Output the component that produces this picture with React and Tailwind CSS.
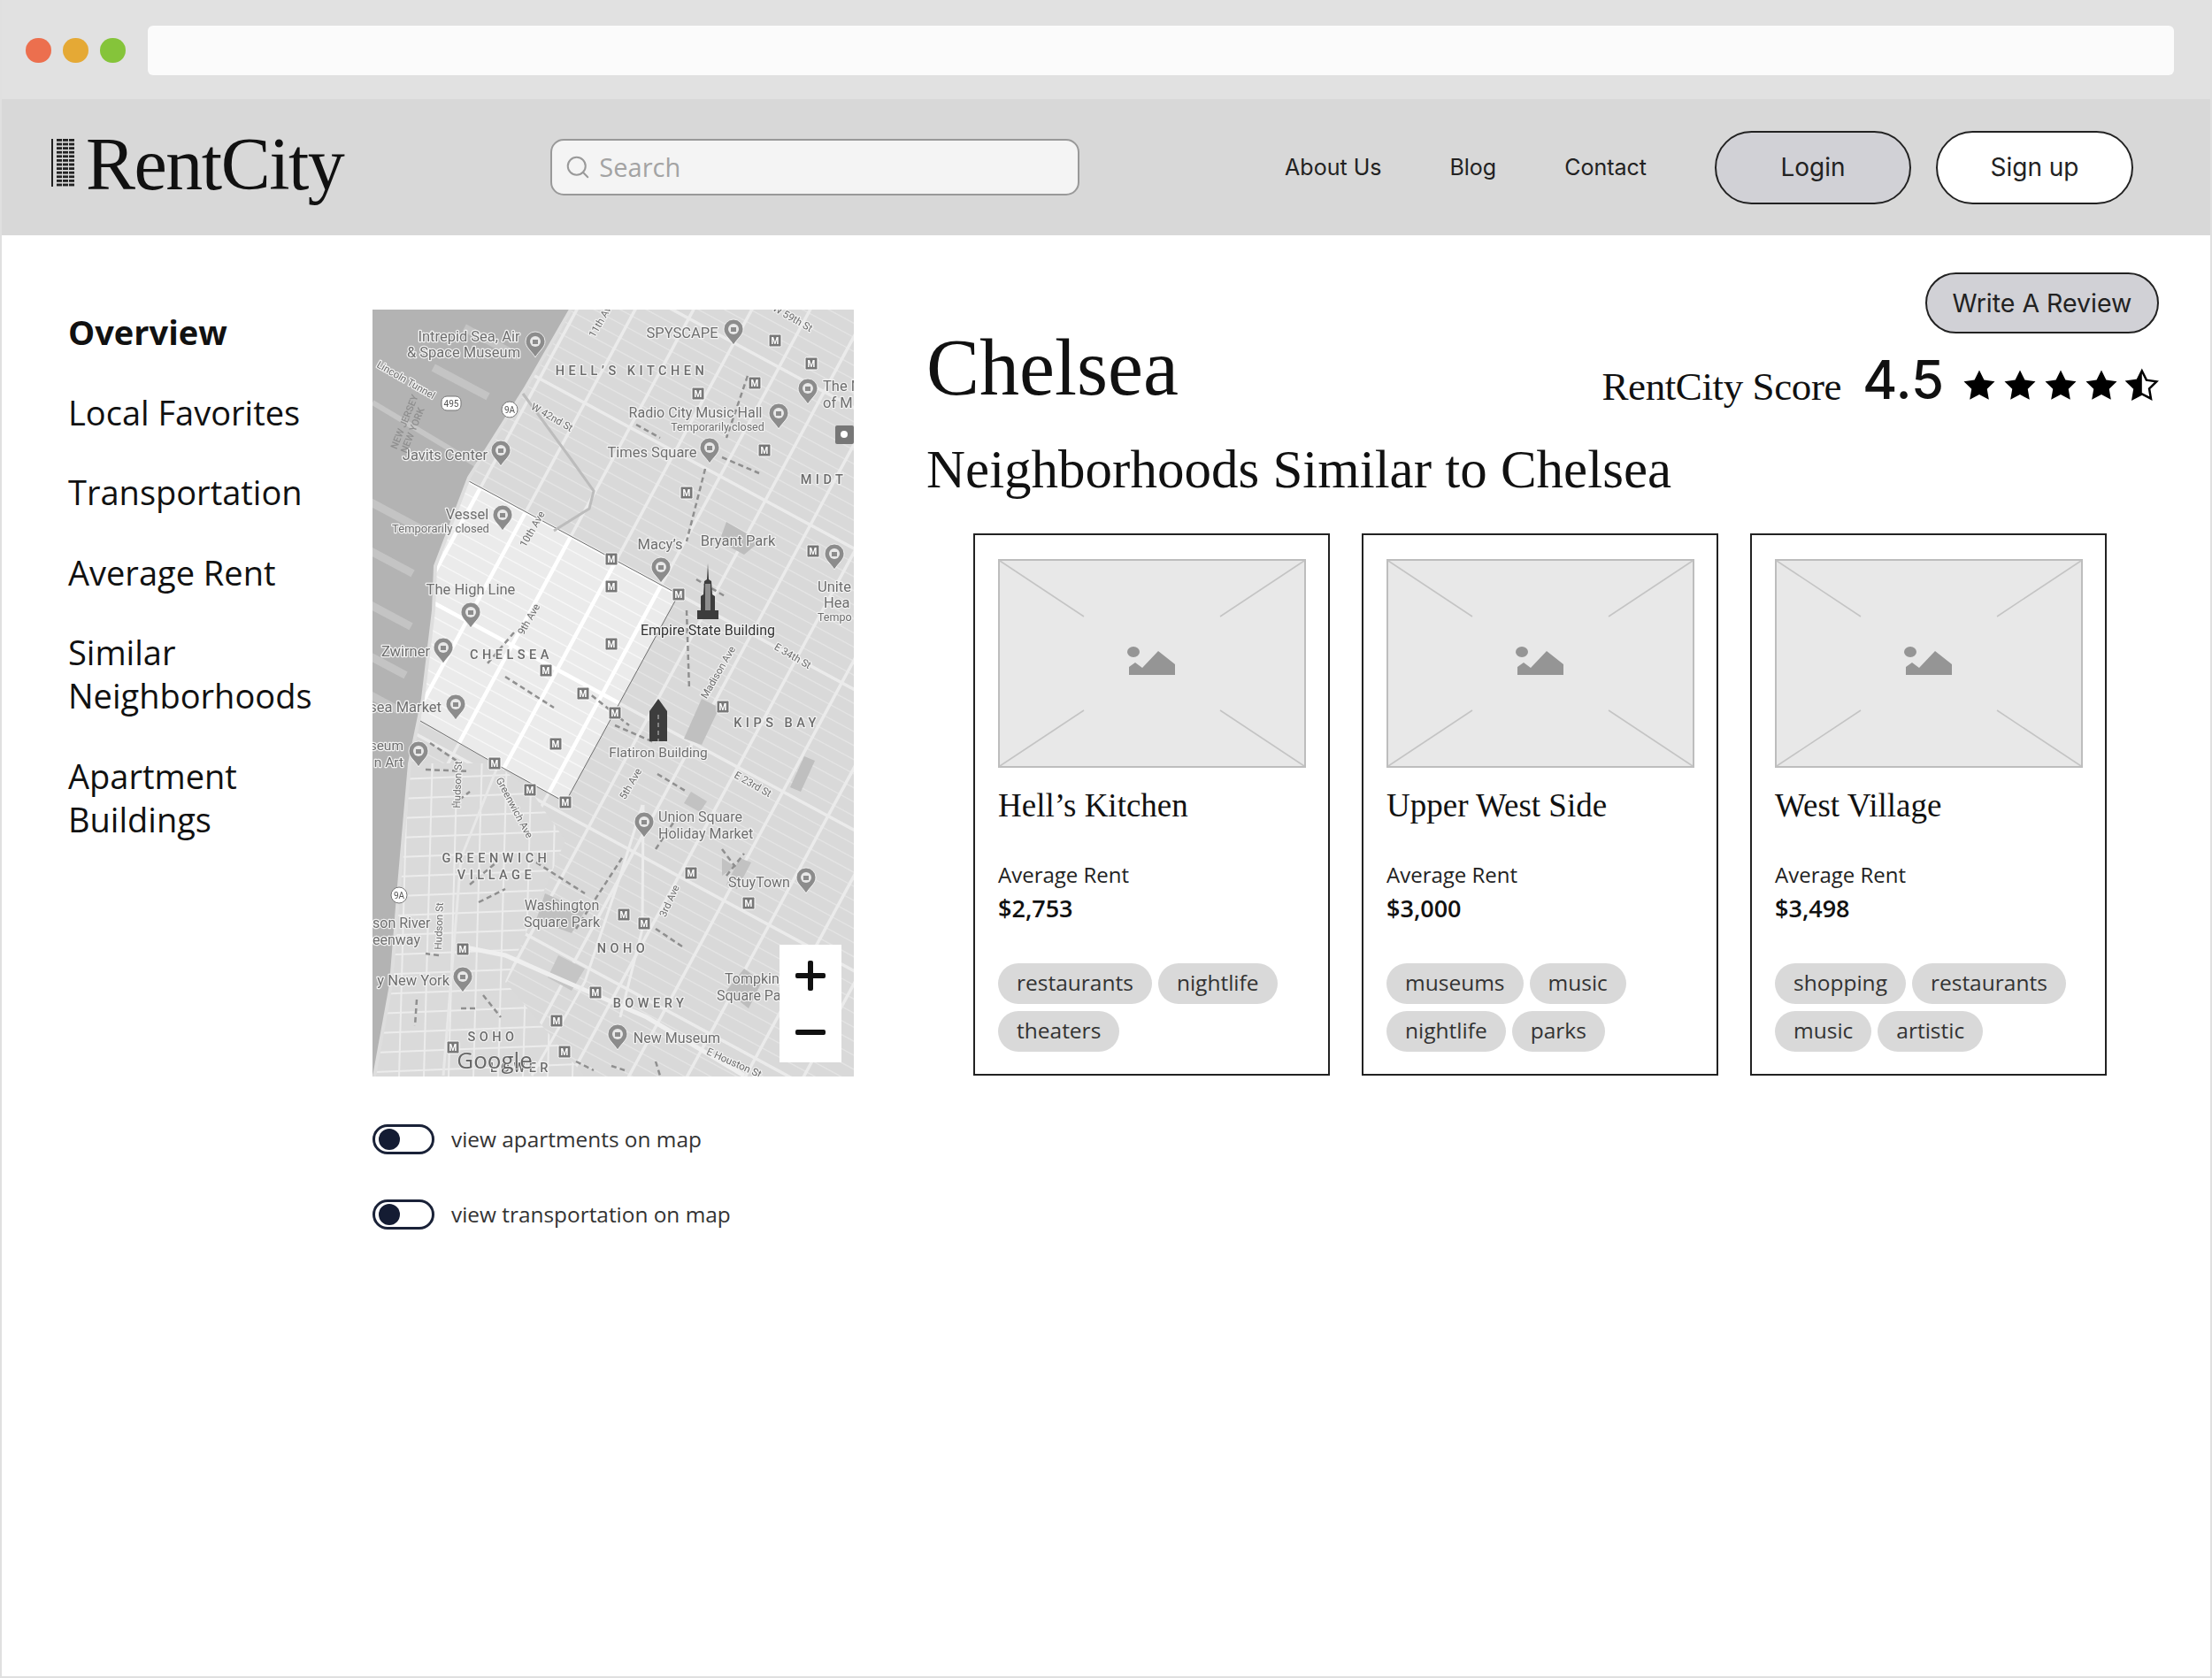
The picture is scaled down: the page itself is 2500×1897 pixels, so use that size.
import React from 'react'
import { Search } from 'lucide-react'

const STAR = 'M12 2l3.09 6.26L22 9.27l-5 4.87 1.18 6.88L12 17.77l-6.18 3.25L7 14.14 2 9.27l6.91-1.01L12 2z'

const sideLinks = ['Local Favorites', 'Transportation', 'Average Rent', 'Similar Neighborhoods', 'Apartment Buildings']

const cards = [
  { name: "Hell’s Kitchen", rent: '$2,753', tags: ['restaurants', 'nightlife', 'theaters'] },
  { name: 'Upper West Side', rent: '$3,000', tags: ['museums', 'music', 'nightlife', 'parks'] },
  { name: 'West Village', rent: '$3,498', tags: ['shopping', 'restaurants', 'music', 'artistic'] },
]

// map data, in px from the map's top left corner
const stations = [
  [455, 35], [496, 61], [432, 83], [368, 95], [443, 159], [355, 207], [270, 282], [270, 313], [346, 322],
  [270, 378], [196, 408], [238, 434], [396, 449], [274, 456], [207, 491], [138, 513], [178, 543], [218, 557],
  [360, 637], [425, 671], [284, 684], [307, 694], [102, 723], [252, 772], [208, 804], [91, 834], [217, 839], [498, 273],
]

const pins = [
  [184, 37], [408, 23], [492, 90], [459, 118], [145, 160], [381, 157], [147, 233], [326, 292], [522, 277],
  [111, 343], [80, 383], [94, 447], [52, 500], [307, 580], [490, 643], [102, 755], [277, 820],
]

const labels = [
  ['Intrepid Sea, Air', 109, 36, 16.5], ['& Space Museum', 103, 54, 16.5], ['SPYSCAPE', 350, 32, 16.5],
  ['Radio City Music Hall', 365, 122, 16], ['Temporarily closed', 390, 137, 12.5], ['Javits Center', 82, 170, 16.5],
  ['Times Square', 316, 167, 16.5], ['Vessel', 107, 237, 16.5], ['Temporarily closed', 77, 252, 13],
  ['Macy’s', 325, 271, 16.5], ['Bryant Park', 413, 267, 16.5], ['The High Line', 111, 322, 16.5],
  ['Flatiron Building', 323, 506, 15.5], ['Washington', 214, 679, 16], ['Square Park', 214, 698, 16],
  ['StuyTown', 437, 653, 16], ['New Museum', 344, 829, 16],
]

const leftLabels = [
  ['The M', 509, 92, 16.5], ['of M', 509, 111, 16.5], ['Unite', 503, 319, 16.5], ['Hea', 510, 337, 16.5], ['Tempo', 503, 352, 12.5],
  ['Union Square', 323, 579, 16], ['Holiday Market', 323, 598, 16], ['son River', 0, 699, 16], ['eenway', 0, 718, 16],
  ['Tompkins', 398, 762, 16], ['Square Park', 389, 781, 16],
]

const rightLabels = [
  ['Zwirner', 65, 392, 16.5], ['sea Market', 78, 455, 16.5], ['seum', 35, 498, 15.5], ['n Art', 35, 517, 15.5], ['y New York', 87, 764, 16.5],
]

const areas = [
  ['HELL’S KITCHEN', 293, 74], ['MIDT', 510, 197], ['CHELSEA', 157, 395], ['KIPS BAY', 457, 472], ['GREENWICH', 140, 625],
  ['VILLAGE', 140, 644], ['NOHO', 283, 727], ['BOWERY', 314, 789], ['SOHO', 136, 827], ['LOWER', 168, 862],
]

const roadNames = [
  ['11th Ave', 262, 13, -60], ['W 59th St', 473, 13, 30], ['Lincoln Tunnel', 36, 83, 30], ['W 42nd St', 201, 125, 30],
  ['10th Ave', 184, 250, -60], ['9th Ave', 180, 352, -60], ['E 34th St', 473, 395, 30], ['Madison Ave', 394, 412, -60],
  ['E 23rd St', 428, 540, 30], ['5th Ave', 295, 538, -60], ['Greenwich Ave', 157, 565, 62], ['Hudson St', 100, 537, -88],
  ['3rd Ave', 339, 670, -65], ['Hudson St', 79, 697, -88], ['E Houston St', 407, 855, 24],
]

const subwayLines = [
  'M424 75L400 145', 'M376 180L355 262', 'M298 130L325 145', 'M395 167L437 185', 'M355 340L358 430', 'M366 305L400 325',
  'M160 365L130 400', 'M150 415L205 450', 'M240 430L290 470', 'M274 470L320 490', 'M322 525L355 545', 'M340 580L320 610',
  'M282 620L230 700', 'M185 625L240 660', 'M110 650L140 625', 'M120 670L150 655', 'M320 700L350 720', 'M60 520L110 522',
  'M65 490L95 510', 'M90 560L110 545', 'M395 610L410 630', 'M400 640L420 615', 'M75 730L60 728', 'M125 775L145 800', 'M100 790L120 790',
  'M50 780L48 810', 'M230 850L250 860', 'M270 855L285 860', 'M320 850L325 866',
]

function StreetGrid({ major, minor, majorWidth = 3.5 }) {
  // streets run at about 28deg, avenues square to them
  const streets = []
  for (let i = -50; i < 60; i++) streets.push(i * 14)
  const avenues = []
  for (let i = -10; i < 12; i++) avenues.push(i * 58 + 15)

  return (
    <g transform="rotate(28.4 109 194) translate(109 194)">
      {streets.map((y, i) => (
        <line key={i} x1="-900" x2="1100" y1={y} y2={y} stroke={i % 10 === 0 ? major : minor} strokeWidth={i % 10 === 0 ? majorWidth : 1.4} />
      ))}
      {avenues.map((x, i) => (
        <line key={i} x1={x} x2={x} y1="-900" y2="1100" stroke={major} strokeWidth={majorWidth} />
      ))}
    </g>
  )
}

function MapDrawing() {
  const land = 'M224 0L174 87L109 190L71 290L69 340L57 440L42 513L29 663L21 763L2 867L544 867L544 0Z'
  const chelsea = 'M109 194L346 322L218 557L138 513L54 465L57 440L69 340L71 290Z'
  const village = 'M42 513L138 513L178 543L218 600L150 760L240 867L2 867L21 763L29 663Z'

  return (
    <svg viewBox="0 0 544 867" className="block w-full h-full blur-[0.6px]" fontFamily="Roboto, sans-serif">
      <defs>
        <clipPath id="land"><path d={land} /></clipPath>
        <clipPath id="chelsea"><path d={chelsea} /></clipPath>
        <clipPath id="village"><path d={village} /></clipPath>
      </defs>

      <rect width="544" height="867" fill="#b3b3b3" />

      {/* piers */}
      {[[150, 40], [115, 85], [40, 235], [30, 285], [28, 345], [22, 400], [15, 440]].map(([x, y], i) => (
        <rect key={i} x={x - 50} y={y} width="70" height="9" fill="#c4c4c4" transform={`rotate(28 ${x} ${y})`} />
      ))}
      <path d="M0 105L150 195" stroke="#c6c6c6" strokeWidth="6" />

      <path d={land} fill="#d9d9d9" />
      <g clipPath="url(#land)">
        <StreetGrid major="#ebebeb" minor="#e4e4e4" />
      </g>

      {/* parks and blocks */}
      <path d="M400 240L438 262L420 277L392 262Z" fill="#bdbdbd" />
      <path d="M372 440L392 450L372 492L352 485Z" fill="#c0c0c0" />
      <path d="M488 505L500 510L484 545L472 540Z" fill="#bfbfbf" />
      <path d="M360 545L378 556L370 568L352 558Z" fill="#c2c2c2" />
      <path d="M395 620L410 630L395 640Z" fill="#c2c2c2" />
      <path d="M415 620L428 625L412 655L400 650Z" fill="#c2c2c2" />
      <path d="M420 745L440 760L425 790L400 770Z" fill="#bdbdbd" />
      <path d="M195 660L240 680L225 705L185 690Z" fill="#c0c0c0" />
      <path d="M210 730L240 745L225 770L198 755Z" fill="#c5c5c5" />

      {/* chelsea stands out in white */}
      <path d={chelsea} fill="#ebebeb" />
      <g clipPath="url(#chelsea)">
        <StreetGrid major="#ffffff" minor="#f7f7f7" majorWidth={4.5} />
      </g>
      <path d="M54 465L138 513L218 557L346 322L109 194" fill="none" stroke="#6d6d6d" strokeWidth="1" />

      {/* the village has its own street grid */}
      <path d={village} fill="#dadada" />
      <g clipPath="url(#village)" stroke="#ececec" strokeWidth="2">
        {[0, 1, 2, 3, 4, 5, 6, 7, 8, 9, 10, 11, 12, 13, 14, 15, 16].map((i) => (
          <line key={i} x1="0" x2="260" y1={510 + i * 22} y2={500 + i * 22} />
        ))}
        {[0, 1, 2, 3, 4, 5, 6, 7].map((i) => (
          <line key={i} x1={40 + i * 28} x2={30 + i * 28} y1="500" y2="867" />
        ))}
      </g>

      <path d="M100 720L150 730L310 800L420 866" fill="none" stroke="#efefef" strokeWidth="5" />
      <path d="M140 520L100 620L80 866" fill="none" stroke="#e8e8e8" strokeWidth="3" />
      <path d="M305 560L280 640L240 760L180 866" fill="none" stroke="#ececec" strokeWidth="3" />
      <path d="M306 560L305 700L280 800" fill="none" stroke="#ececec" strokeWidth="3" />
      <path d="M224 0L174 87L109 190L71 290L69 340L57 440L42 513L29 663L21 763L2 867" fill="none" stroke="#dedede" strokeWidth="4" />
      <path d="M170 95L225 170L250 205L245 225L205 250" fill="none" stroke="#bcbcbc" strokeWidth="3" />

      {subwayLines.map((d, i) => (
        <path key={i} d={d} fill="none" stroke="#8f8f8f" strokeWidth="2.5" strokeDasharray="6 4" />
      ))}

      {/* shields */}
      <rect x="78" y="98" width="22" height="16" rx="6" fill="#fff" stroke="#777" />
      <text x="89" y="110" fontSize="10" textAnchor="middle" fill="#555">495</text>
      {[[155, 113], [30, 662]].map(([x, y], i) => (
        <g key={i}>
          <circle cx={x} cy={y} r="9" fill="#fff" stroke="#777" />
          <text x={x} y={y + 4} fontSize="10" textAnchor="middle" fill="#555">9A</text>
        </g>
      ))}

      {stations.map(([x, y], i) => (
        <g key={i}>
          <rect x={x - 7} y={y - 7} width="14" height="14" rx="1.5" fill="#777" stroke="#fff" />
          <text x={x} y={y + 4} fontSize="10" fontWeight="700" textAnchor="middle" fill="#fff">M</text>
        </g>
      ))}

      <rect x="523" y="131" width="21" height="21" rx="2" fill="#777" />
      <circle cx="533" cy="141" r="4" fill="#fff" />

      {pins.map(([x, y], i) => (
        <g key={i} transform={`translate(${x} ${y})`}>
          <path d="M0 17C-4 10 -11 6 -11 -1A11 11 0 0 1 11 -1C11 6 4 10 0 17Z" fill="#8c8c8c" stroke="#fff" strokeWidth="0.8" />
          <circle cx="0" cy="-1" r="6" fill="#e8e8e8" />
          <rect x="-3" y="-3" width="6" height="5" fill="#8c8c8c" />
        </g>
      ))}

      {/* landmarks */}
      <g fill="#3d3d3d">
        <path d="M379 287L380 305L383 307L384 322L387 324L387 340L391 340L391 350L367 350L367 340L371 340L371 324L374 322L375 307L378 305Z" />
        <rect x="376" y="310" width="6" height="30" fill="#8d8d8d" />
        <path d="M323 440L333 454L333 488L313 488L313 454Z" />
        <path d="M323 458V488" stroke="#9a9a9a" strokeDasharray="5 4" strokeWidth="1.5" />
      </g>

      <g stroke="#f2f2f2" strokeWidth="2.5" paintOrder="stroke" strokeLinejoin="round">
        <text x="379" y="368" fontSize="16" textAnchor="middle" fill="#333">Empire State Building</text>
        {labels.map(([t, x, y, s], i) => (
          <text key={i} x={x} y={y} fontSize={s} textAnchor="middle" fill="#6e6e6e">{t}</text>
        ))}
        {leftLabels.map(([t, x, y, s], i) => (
          <text key={i} x={x} y={y} fontSize={s} fill="#6e6e6e">{t}</text>
        ))}
        {rightLabels.map(([t, x, y, s], i) => (
          <text key={i} x={x} y={y} fontSize={s} textAnchor="end" fill="#6e6e6e">{t}</text>
        ))}
        {areas.map(([t, x, y], i) => (
          <text key={i} x={x} y={y} fontSize="14.5" fontWeight="500" letterSpacing="4.5" textAnchor="middle" fill="#6b6b6b">{t}</text>
        ))}
        {roadNames.map(([t, x, y, r], i) => (
          <text key={i} x={x} y={y} fontSize="11.5" textAnchor="middle" fill="#6b6b6b" transform={`rotate(${r} ${x} ${y})`}>{t}</text>
        ))}
      </g>
      <text x="138" y="858" fontSize="26" textAnchor="middle" fill="#666" stroke="#eee" strokeWidth="1.5" paintOrder="stroke" fontFamily="Open Sans, sans-serif">Google</text>
      <text x="8" y="150" fontSize="11" fill="#8f8f8f" fontWeight="500" transform="rotate(-68 24 140)">NEW JERSEY</text>
      <text x="8" y="162" fontSize="11" fill="#8f8f8f" fontWeight="500" transform="rotate(-68 24 140)">NEW YORK</text>
    </svg>
  )
}

function Placeholder() {
  return (
    <svg viewBox="0 0 348 236" className="block w-[348px] h-[236px] shrink-0">
      <rect x="1" y="1" width="346" height="234" fill="#e8e8e8" stroke="#bdbdbd" strokeWidth="2" />
      <path d="M2 2L97 65M346 2L251 65M2 234L97 171M346 234L251 171" stroke="#c4c4c4" strokeWidth="1.5" />
      <ellipse cx="153" cy="105" rx="7" ry="6" fill="#959595" />
      <path d="M148 131V122L155 117L163 123L181 104L200 119V131Z" fill="#959595" />
    </svg>
  )
}

function Stars() {
  return (
    <svg viewBox="0 0 221 42" className="block w-[221px] h-[42px]">
      <defs>
        <clipPath id="half"><rect x="0" y="0" width="12" height="24" /></clipPath>
      </defs>
      {[0, 46, 92, 138].map((x) => (
        <path key={x} d={STAR} transform={`translate(${x - 3} 0) scale(1.75)`} />
      ))}
      <g transform="translate(182 1) scale(1.65)">
        <path d={STAR} fill="#fff" stroke="#000" strokeWidth="1.5" />
        <path d={STAR} clipPath="url(#half)" />
      </g>
    </svg>
  )
}

function Logo() {
  const rows = [0, 1, 2, 3, 4, 5, 6, 7, 8, 9, 10, 11]
  return (
    <div className="flex items-center gap-[11px] mt-[-6px]">
      <svg viewBox="0 0 28 54" className="block w-[28px] h-[54px] mt-[-4px]">
        <rect x="0" width="2" height="54" fill="#222" />
        {rows.map((r) =>
          [6, 13, 20].map((x) => <rect key={x + '-' + r} x={x} y={r * 4.6} width="6" height="2.8" fill="#222" />)
        )}
      </svg>
      <span className="font-['Liberation_Serif',serif] text-[84px] leading-none tracking-[-1.5px] text-[#111]">RentCity</span>
    </div>
  )
}

function Toggle({ label }) {
  return (
    <div className="flex items-center gap-[19px]">
      <div className="flex items-center w-[70px] h-[34px] rounded-full border-[3px] border-[#1a2238] pl-[4px]">
        <div className="w-[24px] h-[24px] rounded-full bg-[#141c33]" />
      </div>
      <span className="text-[24.4px] leading-none text-[#333]">{label}</span>
    </div>
  )
}

function Card({ name, rent, tags }) {
  return (
    <div className="w-[403px] h-[613px] border-2 border-[#222] pt-[27px] px-[26px]">
      <Placeholder />
      <h3 className="mt-[20px] font-['Liberation_Serif',serif] text-[37px] leading-[46px] font-normal text-[#111]">{name}</h3>
      <p className="mt-[38px] text-[24px] leading-[34px] text-[#222]">Average Rent</p>
      <p className="mt-[2px] text-[27px] leading-[38px] font-semibold text-[#111]">{rent}</p>
      <div className="mt-[43px] flex flex-wrap gap-x-[7px] gap-y-[8px]">
        {tags.map((t) => (
          <span key={t} className="h-[46px] px-[21px] rounded-full bg-[#d9d9d9] text-[24.5px] leading-[44px] text-[#333]">{t}</span>
        ))}
      </div>
    </div>
  )
}

export default function App() {
  return (
    <div className="w-[2500px] h-[1897px] flex flex-col bg-white font-['Open_Sans',sans-serif] border-x-2 border-b-2 border-[#e0e0e0]">
      {/* browser chrome */}
      <div className="h-[112px] shrink-0 flex items-center bg-[#e1e1e1] pl-[27px] pr-[41px] pt-[2px]">
        <div className="w-[29px] h-[28px] rounded-full bg-[#ec6f4e]" />
        <div className="w-[29px] h-[28px] rounded-full bg-[#e5a935] ml-[13px]" />
        <div className="w-[29px] h-[28px] rounded-full bg-[#85c43a] ml-[13px]" />
        <div className="flex-1 h-[56px] rounded-[6px] bg-[#fbfbfb] ml-[25px]" />
      </div>

      {/* nav */}
      <header className="h-[154px] shrink-0 flex items-center bg-[#d8d8d8] pl-[56px] pr-[87px]">
        <Logo />
        <div className="ml-[234px] w-[598px] h-[64px] flex items-center rounded-[15px] border-2 border-[#999] bg-[#f4f4f4] pl-[14px]">
          <Search size={30} strokeWidth={1.6} className="text-[#999] shrink-0" />
          <span className="ml-[9px] text-[29px] text-[#a3a3a3]">Search</span>
        </div>
        <nav className="ml-auto mt-[2px] flex items-center gap-[77px] font-['Inter',sans-serif] text-[25px] text-[#222]">
          <a>About Us</a>
          <a>Blog</a>
          <a>Contact</a>
        </nav>
        <button className="ml-[77px] w-[222px] h-[83px] rounded-[42px] border-2 border-[#222] bg-[#d1d1d6] font-['Inter',sans-serif] text-[28px] text-[#222]">Login</button>
        <button className="ml-[28px] w-[223px] h-[83px] rounded-[42px] border-2 border-[#222] bg-white font-['Inter',sans-serif] text-[28px] text-[#222]">Sign up</button>
      </header>

      <main className="flex flex-1">
        {/* side menu */}
        <aside className="w-[419px] shrink-0 pl-[75px] pt-[85px] text-[38px] leading-[49px] text-[#111]">
          <p className="font-bold">Overview</p>
          {sideLinks.map((l) => (
            <p key={l} className="mt-[41.5px] w-[300px]">{l}</p>
          ))}
        </aside>

        {/* map column */}
        <section className="w-[544px] shrink-0 pt-[84px]">
          <div className="relative w-[544px] h-[867px] overflow-hidden">
            <MapDrawing />
            <div className="absolute left-[460px] top-[718px] w-[70px] h-[133px] bg-white flex flex-col items-center justify-center gap-[58px]">
              <div className="relative w-[34px] h-[6px] rounded-[2px] bg-[#111]">
                <div className="absolute left-[14px] top-[-14px] w-[6px] h-[34px] rounded-[2px] bg-[#111]" />
              </div>
              <div className="w-[34px] h-[6px] rounded-[2px] bg-[#111]" />
            </div>
          </div>
          <div className="mt-[54px] flex flex-col gap-[51px]">
            <Toggle label="view apartments on map" />
            <Toggle label="view transportation on map" />
          </div>
        </section>

        {/* neighborhood content */}
        <section className="ml-[82px] w-[1393px] pt-[42px] flex flex-col">
          <button className="self-end w-[264px] h-[69px] pt-[2px] rounded-[35px] border-2 border-[#222] bg-[#d1d1d6] font-['Inter',sans-serif] text-[28.5px] text-[#222]">Write A Review</button>
          <div className="mt-[-11px] flex items-end justify-between font-['Liberation_Serif',serif]">
            <h1 className="text-[90px] leading-[100px] font-normal text-[#111]">Chelsea</h1>
            <div className="flex items-end pb-[1px]">
              <span className="text-[45px] leading-[56px] tracking-[-0.4px] text-[#111]">RentCity Score</span>
              <span className="ml-[24px] font-['Inter',sans-serif] font-medium text-[60px] leading-[72px] text-[#111]">4.5</span>
              <div className="ml-[22px] mb-[8px]"><Stars /></div>
            </div>
          </div>
          <h2 className="mt-[29px] text-[61px] leading-[72px] font-normal font-['Liberation_Serif',serif] text-[#111]">Neighborhoods Similar to Chelsea</h2>
          <div className="mt-[36px] ml-[53px] flex gap-[36px]">
            {cards.map((c) => (
              <Card key={c.name} {...c} />
            ))}
          </div>
        </section>
      </main>
    </div>
  )
}
